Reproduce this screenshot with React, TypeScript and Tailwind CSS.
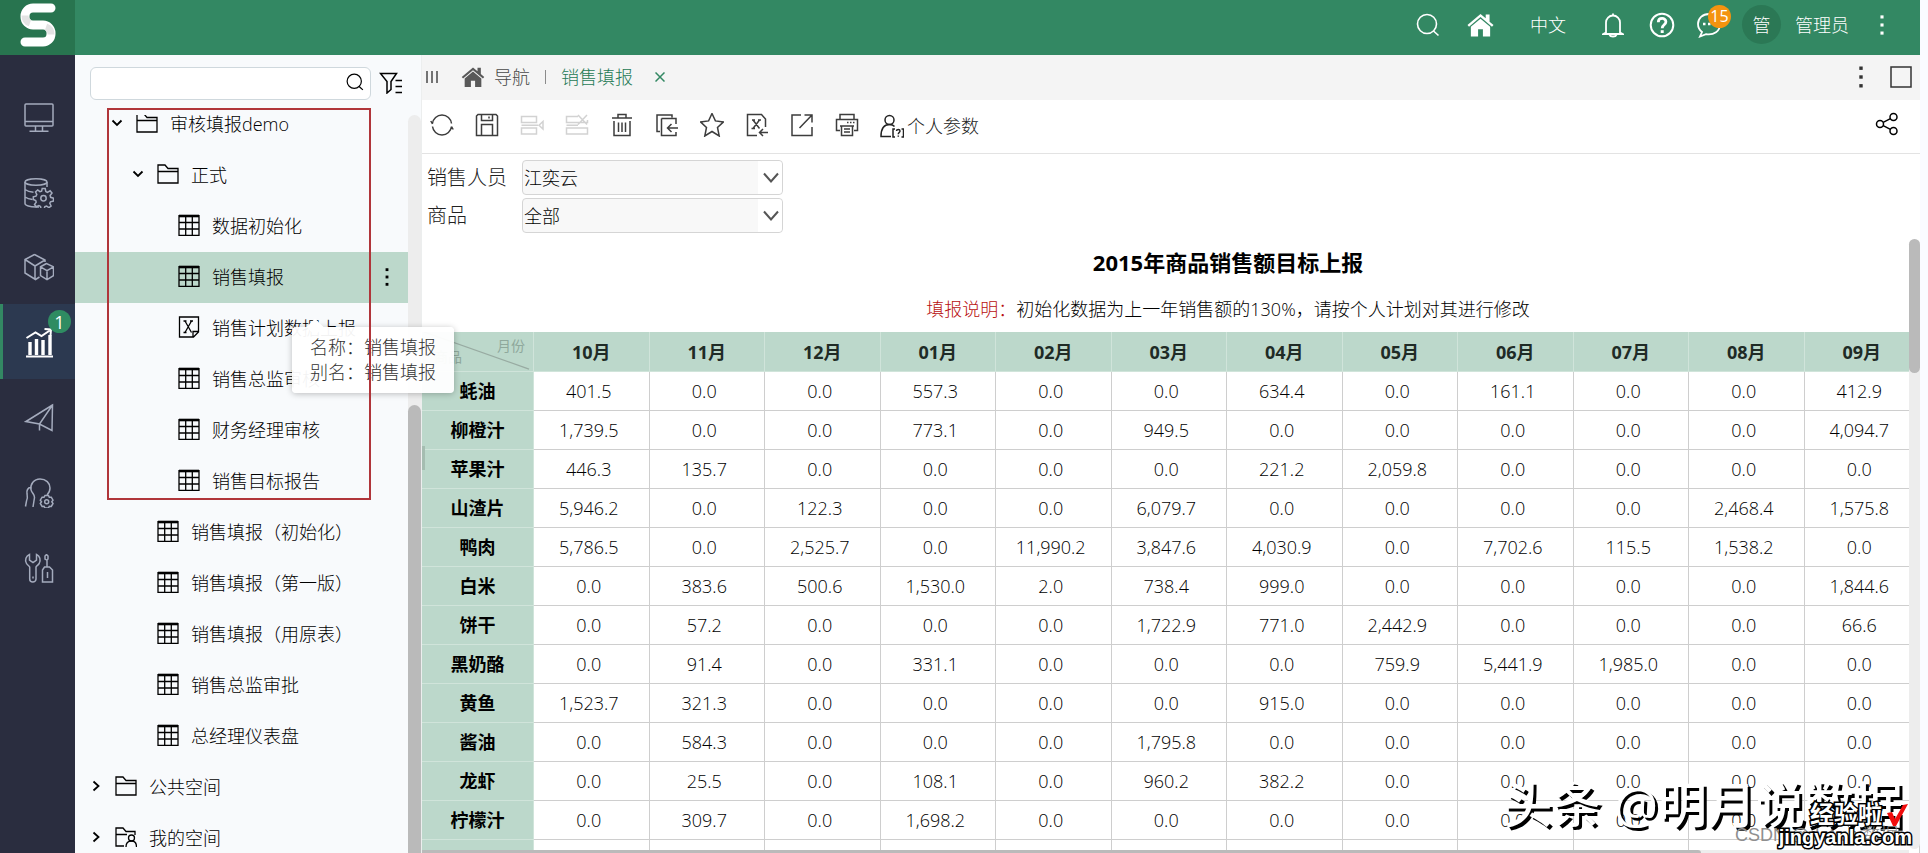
import type { ReactNode } from "react";

type IconProps = { className?: string; children: ReactNode; box?: string; width?: number };

function Icon({ className = "h-6 w-6", children, box = "0 0 24 24", width = 1.5 }: IconProps) {
  return (
    <svg
      viewBox={box}
      fill="none"
      stroke="currentColor"
      strokeWidth={width}
      className={`shrink-0 ${className}`}
      aria-hidden="true"
    >
      {children}
    </svg>
  );
}

/* ---------- shared icons ---------- */

function SearchIcon({ className }: { className?: string }) {
  return (
    <Icon className={className} width={1.6}>
      <circle cx="11" cy="11" r="9.5" />
      <path d="M17.5 18l5 4.5" />
    </Icon>
  );
}

function HomeIcon({ className }: { className?: string }) {
  return (
    <svg viewBox="0 0 28 24" fill="currentColor" className={`shrink-0 ${className}`} aria-hidden="true">
      <path d="M14 0.5L0.5 12l1.6 1.8L14 3.8l11.9 10 1.6-1.8-4.1-3.5V1h-4v4.1z" />
      <path d="M14 5.4L4 13.8V24h7.5v-7.5h5V24H24V13.8z" />
    </svg>
  );
}

function DotsIcon({ className }: { className?: string }) {
  return (
    <svg viewBox="0 0 6 24" fill="currentColor" className={`shrink-0 ${className}`} aria-hidden="true">
      <rect x="1.3" y="1.5" width="3.4" height="3.4" />
      <rect x="1.3" y="10.3" width="3.4" height="3.4" />
      <rect x="1.3" y="19.1" width="3.4" height="3.4" />
    </svg>
  );
}

/* ---------- left navigation ---------- */

const navItems = [
  {
    label: "门户",
    icon: (
      <>
        <rect x="1" y="1" width="28" height="22" rx="1" />
        <path d="M1 18.5h28M11.5 23v5M18.5 23v5M5.5 28.3h19" />
      </>
    ),
  },
  {
    label: "数据连接",
    icon: (
      <>
        <ellipse cx="12" cy="4" rx="11" ry="3.2" />
        <path d="M1 4v21.5c0 2 5 3.5 11 3.5h3M23 4v5M1 11.5c2 1.5 5 2.5 8.5 2.7M1 19c2 1.5 4.5 2.3 7.5 2.5" />
        <path d="M18.2 10.5h3l.6 3 1.6.8 2.7-1.5 1.9 2.3-1.9 2.3.5 1.9 2.9.9v2.8l-3 .8-.7 1.5 1.3 2.7-2.2 1.7-2.4-1.7-1.6.5-.9 2.9h-2.8l-.7-3-1.6-.8-2.7 1.2-1.7-2.3 1.7-2.4-.5-1.6-2.4-1v-2.6l2.7-.8.8-1.7-1.3-2.5 2.2-1.9 2.2 1.7 1.7-.6z" />
        <circle cx="19.5" cy="20.3" r="2.7" />
      </>
    ),
  },
  {
    label: "数据准备",
    icon: (
      <>
        <path d="M10.5 1.5L1 6.5v13.5l10.5 6.500 4-2.5M10.5 1.5L21 7v2M1 6.5l10 6.5L21 7M11 13v13" />
        <path d="M22.5 10.5l-6 3.3v8.9l6.5 4 6.5-4v-8.9zM16.5 13.8l6.5 3.8 6.5-3.8M23 17.6v9" />
      </>
    ),
  },
  {
    label: "分析展现",
    active: true,
    icon: (
      <>
        <path d="M2 28.5h27" strokeWidth="2" />
        <path d="M6 14v13M12.5 11v16M19 12v15M26 7v20" strokeWidth="3.4" />
        <path d="M2.5 10l9-5.5 6 3.5 9-6M20.5 1l6.5.5-.5 6" strokeWidth="2" />
      </>
    ),
  },
  {
    label: "公共设置",
    icon: <path d="M28.5 2L2 18.5l13.5 2.5 12.500 6.5zM28.5 2l-13 19v6.5" />,
  },
  {
    label: "系统监控",
    icon: (
      <>
        <path d="M7 12c-1-6 3-11 9-11s10 4 10 9c0 3-1 5-3 7M7 12c1.5 4 3.5 4 3.5 7.5L9 29M7 9c-3.5 1-4.5 4-4 7 .5 2.5 1 4-.5 7l-1 5.5" />
        <path d="M21 17.5h3.5l.8 1.8 2-.1 1.700 3-1.2 1.6 1.2 1.7-1.7 2.9-2-.1-.8 1.6H21l-1-1.6-1.9.1-1.8-2.9 1.2-1.7-1.2-1.6 1.8-3 1.9.1z" />
        <circle cx="22.7" cy="23.7" r="2" />
      </>
    ),
  },
  {
    label: "系统运维",
    icon: (
      <>
        <path d="M5.5 1.5C2 3 .5 7 2.5 10.5c1 1.7 2.7 2.3 3.2 3.5V26c0 4 6.3 4 6.3 0V14c.5-1.2 2.3-2 3.2-3.5C17 7 16 3 12.500 1.5V7L9 9.5 5.5 7z" />
        <path d="M9 23.5v2M22.5 1.5l1.5 1.5v3l-1 1v7M22.5 1.5L21 3v3l1.5 1" />
        <path d="M20.5 14h5l3 3v12h-10V17zM23.5 19v6" />
      </>
    ),
  },
];

function SideNav() {
  return (
    <nav className="flex w-[75px] shrink-0 flex-col bg-[#2a2d3f] pt-6 text-[#a4abbd]">
      {navItems.map((item) => (
        <button
          key={item.label}
          type="button"
          aria-label={item.label}
          className={`relative flex h-[75px] items-center justify-center pt-[2px] ${
            item.active ? "border-l-[3px] border-[#338863] bg-[#2c3950] pr-[3px] text-white" : ""
          }`}
        >
          <Icon className="ml-[2px] h-[30px] w-[30px]" box="0 0 30 30">
            {item.icon}
          </Icon>
          {item.active && (
            <span className="absolute top-[6px] right-1 flex h-[23px] w-[23px] items-center justify-center rounded-full bg-[#2f8c62] text-lg leading-none font-normal">
              1
            </span>
          )}
        </button>
      ))}
    </nav>
  );
}

/* ---------- top bar ---------- */

function TopBar() {
  return (
    <header className="flex h-[55px] shrink-0 items-center bg-[#338863] text-white">
      <div className="flex h-full w-[75px] items-center justify-center bg-[#28744f]">
        <svg viewBox="0 0 36 44" className="mb-[6px] h-11 w-9" fill="none" aria-label="logo">
          <path
            d="M31 5H13a8 8 0 0 0-8 8v1a8 8 0 0 0 8 8h10a8 8 0 0 1 8 8v1a8 8 0 0 1-8 8H5"
            stroke="#fff"
            strokeWidth="9"
            strokeLinecap="round"
          />
          <path d="M5 12.5c0 4 2 6.5 5 7.5M31 31.5c0-4-2-6.5-5-7.5" stroke="#e3e3e3" strokeWidth="7" />
        </svg>
      </div>
      <div className="mb-[6px] flex flex-1 items-center justify-end pr-[35px] font-normal">
        <button type="button" aria-label="搜索" className="mr-[27px]">
          <SearchIcon className="h-6 w-6" />
        </button>
        <a href="#home" aria-label="首页" className="mr-9">
          <HomeIcon className="h-6 w-[27px]" />
        </a>
        <button type="button" className="mr-9 font-light">中文</button>
        <button type="button" aria-label="通知" className="mr-[25px]">
          <Icon className="h-[26px] w-[22px]" box="0 0 22 26" width={1.8}>
            <path d="M11 1.5v1.5M4 20.5V10.5a7 7 0 0 1 14 0v10l2.5 1.5H1.5zM7.5 23c1 2 6 2 7 0" />
          </Icon>
        </button>
        <button type="button" aria-label="帮助" className="mr-[21px]">
          <Icon className="h-[26px] w-[26px]" box="0 0 26 26" width={2}>
            <circle cx="13" cy="13" r="11.3" />
            <path d="M9.3 10.2c0-5 7.6-4.8 7.6-.4 0 3-3.7 3-3.7 6.4" strokeWidth="2.8" />
            <path d="M13.2 18.2v2.8" strokeWidth="3" />
          </Icon>
        </button>
        <button type="button" aria-label="消息" className="relative mr-[20px]">
          <Icon className="h-[26px] w-[26px]" box="0 0 26 26" width={1.8}>
            <path d="M13 2C6.5 2 2 6.5 2 12c0 3.5 1.5 6 4 8l-2 4.5 6-2.3c8 1.3 14-3.2 14-9.7" />
            <path d="M7 12h2.5M12 12h2.5" strokeWidth="2.5" />
          </Icon>
          <span className="absolute -top-[7px] left-3 flex h-[23px] w-[23px] items-center justify-center rounded-full bg-[#f4930f] text-base leading-none">
            15
          </span>
        </button>
        <span className="mr-[14px] flex h-[39px] w-[39px] items-center justify-center rounded-full bg-[#2b7855] font-light">管</span>
        <span className="mr-[30px] font-light">管理员</span>
        <button type="button" aria-label="更多">
          <DotsIcon className="h-[22px] w-[6px]" />
        </button>
      </div>
    </header>
  );
}

/* ---------- resource tree ---------- */

type NodeKind = "folder" | "myfolder" | "table" | "excel";
type TreeNode = { label: string; level: number; kind: NodeKind; open?: boolean; selected?: boolean };

const tree: TreeNode[] = [
  { label: "审核填报demo", level: 1, kind: "folder", open: true },
  { label: "正式", level: 2, kind: "folder", open: true },
  { label: "数据初始化", level: 3, kind: "table" },
  { label: "销售填报", level: 3, kind: "table", selected: true },
  { label: "销售计划数据上报", level: 3, kind: "excel" },
  { label: "销售总监审核", level: 3, kind: "table" },
  { label: "财务经理审核", level: 3, kind: "table" },
  { label: "销售目标报告", level: 3, kind: "table" },
  { label: "销售填报（初始化）", level: 2, kind: "table" },
  { label: "销售填报（第一版）", level: 2, kind: "table" },
  { label: "销售填报（用原表）", level: 2, kind: "table" },
  { label: "销售总监审批", level: 2, kind: "table" },
  { label: "总经理仪表盘", level: 2, kind: "table" },
  { label: "公共空间", level: 0, kind: "folder" },
  { label: "我的空间", level: 0, kind: "myfolder" },
];

const indents = ["pl-3", "pl-[33px]", "pl-[54px]", "pl-[75px]"];

function NodeIcon({ kind }: { kind: NodeKind }) {
  return (
    <Icon className="mb-[2px] h-[22px] w-[22px]" box="0 0 22 22" width={1.3}>
      {kind === "folder" && <path d="M1 20V2h7l3 3.5h10V20zM1 8.5h20" />}
      {kind === "myfolder" && (
        <>
          <path d="M9 20H1V2h7l3 3.5h9V9M1 8.5h11" />
          <circle cx="16.5" cy="12" r="3" />
          <path d="M11 21c0-4 2-6 5.5-6s5 2.5 5 6" />
        </>
      )}
      {kind === "table" && (
        <>
          <path d="M1 1.7h20v19.6H1zM7.7 2v19M14.3 2v19M1 8.5h20M1 15h20" />
          <path d="M1 2h20" strokeWidth="2.6" />
        </>
      )}
      {kind === "excel" && (
        <>
          <path d="M1.5 1h19v15l-5 5H1.5zM20.5 15.5h-5.500V21M7 5l6.5 11.5M13.500 5L7 16.5" />
          <path d="M5.5 5h3M12 5h3M5.5 16.5h3" />
        </>
      )}
    </Icon>
  );
}

function TreeRow({ node }: { node: TreeNode }) {
  const isFolder = node.kind === "folder" || node.kind === "myfolder";
  return (
    <li className={`flex h-[51px] items-center pb-px ${indents[node.level]} ${node.selected ? "bg-[#bcd8cb]" : ""}`}>
      <span className="mr-[10px] mb-[2px] flex w-[18px] justify-center">
        {isFolder && (
          <Icon className="h-3 w-3" box="0 0 12 12" width={1.8}>
            {node.open ? <path d="M1.5 3.5L6 8l4.5-4.5" /> : <path d="M3.5 1.5L8.5 6l-5 4.5" />}
          </Icon>
        )}
      </span>
      <NodeIcon kind={node.kind} />
      <a href="#node" className="ml-3 flex-1 whitespace-nowrap">{node.label}</a>
      {node.selected && (
        <button type="button" aria-label="操作" className="mr-[18px]">
          <DotsIcon className="h-5 w-[6px]" />
        </button>
      )}
    </li>
  );
}

function ResourceTree() {
  return (
    <aside className="relative flex w-[347px] shrink-0 flex-col border-r border-[#eceeee] bg-[#f8fafc] text-black">
      <div className="flex h-[60px] shrink-0 items-center pb-1 pl-[15px]">
        <div className="relative w-[281px]">
          <input
            type="text"
            aria-label="搜索资源"
            className="block h-[33px] w-full rounded-md border border-[#cfd8dd] bg-white pr-9 pl-3 outline-none"
          />
          <span className="pointer-events-none absolute top-[6px] right-[7px]">
            <SearchIcon className="h-[18px] w-[18px]" />
          </span>
        </div>
        <button type="button" aria-label="筛选" className="ml-2">
          <Icon className="h-[22px] w-6" box="0 0 24 22" width={1.5}>
            <path d="M1.5 1.5h16l-5.5 8v8L8 21V9.5z" />
            <path d="M16.5 8.5H23M16.5 14.5H23M16.5 20.5H23" />
          </Icon>
        </button>
      </div>
      <div className="flex min-h-0 flex-1">
        <div className="min-w-0 flex-1 overflow-hidden">
          <ul className="-mt-4">
            {tree.map((node) => (
              <TreeRow key={node.label} node={node} />
            ))}
          </ul>
        </div>
        <div className="flex w-[13px] flex-col rounded-t-full bg-[#ededed] pt-[290px]">
          <div className="flex-1 rounded-t-full bg-[#bababa]" />
        </div>
      </div>

      {/* name tooltip of the hovered node */}
      <div className="absolute top-[272px] left-[217px] z-10 rounded bg-white/95 px-[18px] py-2 leading-[25px] whitespace-nowrap text-[#333] shadow-[0_1px_6px_rgba(0,0,0,0.25)]">
        <span className="absolute -top-[6px] left-[17px] h-3 w-3 rotate-45 bg-white" />
        <p>名称：销售填报</p>
        <p>别名：销售填报</p>
      </div>
      <div className="pointer-events-none absolute top-[53px] left-8 z-20 h-[392px] w-[264px] border-2 border-[#b0353a]" />
    </aside>
  );
}

/* ---------- tabs and toolbar ---------- */

function TabBar() {
  return (
    <div className="flex h-[45px] shrink-0 items-center bg-[#f4f4f4] pr-2 pb-[2px] pl-1 text-[#484848]">
      <Icon className="h-3 w-3" box="0 0 12 12" width={1.5}>
        <path d="M1 0v12M6 0v12M11 0v12" />
      </Icon>
      <HomeIcon className="mr-[9px] ml-[23px] h-5 w-6 text-[#595959]" />
      <a href="#nav">导航</a>
      <span className="mx-[15px] h-[14px] w-px bg-[#8b8b8b]" />
      <a href="#report" className="text-[#257a55]">销售填报</a>
      <button type="button" aria-label="关闭" className="ml-[22px] text-[#338863]">
        <Icon className="h-[10px] w-[10px]" box="0 0 10 10">
          <path d="M.5.5l9 9M9.5.5l-9 9" />
        </Icon>
      </button>
      <button type="button" aria-label="更多" className="mr-[26px] ml-auto text-[#333]">
        <DotsIcon className="h-6 w-[6px]" />
      </button>
      <button type="button" aria-label="最大化" className="text-[#333]">
        <Icon className="h-[22px] w-[22px]" box="0 0 22 22">
          <path d="M1 1h20v20H1z" />
        </Icon>
      </button>
    </div>
  );
}

const tools = [
  {
    label: "刷新",
    icon: <path d="M2.5 10.5C3 6 7 2 12 2s9 4 9.5 8.5M2.5 13.500C3 18 7 22 12 22s9-4 9.5-8.5M.8 8l1.7 3M21.5 13.5l1.7 3" />,
  },
  {
    label: "保存",
    icon: <path d="M3 1.5h18l1.5 1.500v19.5h-21V3zM6.5 1.5v6h11v-6M6.5 22.5v-11h11v11M14 3.5v2" />,
  },
  {
    label: "插入行",
    disabled: true,
    icon: <path d="M1.5 3.5h15v6h-15zM1.5 15h15v6h-15zM1.5 12.2H18M23 8.5v7.5l-4-3.8z" />,
  },
  {
    label: "删除行",
    disabled: true,
    icon: <path d="M13 3.5H1.5v6h21V7M1.5 15h21v6h-21zM1.5 12.2H13M13 2l9 9.5M22 2l-9 9.5" />,
  },
  {
    label: "清空",
    icon: <path d="M2 5h20M8 5V1.5h8V5M4 8v14.5h16V8M8.5 9.5V19M12 9.5V19M15.5 9.5V19" />,
  },
  {
    label: "导入",
    icon: <path d="M5 18.5H2V2h15v2.5M6.5 5.5H21V11M21 19v3.5H6.5v-17M23 15H12.500M16.5 11l-4 4 4 4" />,
  },
  {
    label: "收藏",
    icon: <path d="M12 .5l3.4 7.4 8.1 1-6 5.600 1.700 8.500L12 18.500 4.800 23l1.700-8.500-6-5.600 8.100-1z" />,
  },
  {
    label: "导入Excel",
    icon: <path d="M12 22.5H2.5v-21h14l4 4.5v8M8 7l6.5 8.5M14.5 7L8 15.5M7 7h3M13 7h3M6.5 15.5h3.5M23 19.5h-8.5M18 16l-3.5 3.5L18 23" />,
  },
  {
    label: "导出",
    icon: <path d="M11 2H2v20.5h20V14M9.5 15L22 2M14.5 2H22v7.5" />,
  },
  {
    label: "打印",
    icon: <path d="M5 6.5v-5h14v5M5 17.5H1.5v-11h21v11H19M6.5 13h11v9.5h-11zM5 13h14M9 16h6M9 19h6M12 9.5h1.5M15 9.5h1.5M18 9.5h1.5" />,
  },
];

function Toolbar() {
  return (
    <div className="flex h-[54px] shrink-0 items-center gap-[21px] border-b border-[#e3e3e3] pr-[21px] pl-2 text-[#3d3d3d]">
      {tools.map((tool) => (
        <button
          key={tool.label}
          type="button"
          aria-label={tool.label}
          disabled={tool.disabled}
          className="mb-1 disabled:text-[#d2d2d2]"
        >
          <Icon>{tool.icon}</Icon>
        </button>
      ))}
      <button type="button" className="mb-[2px] flex items-center gap-[3px] text-[#222]">
        <Icon className="h-6 w-6">
          <circle cx="9.5" cy="6" r="4.5" />
          <path d="M11 22.5H1c0-7 2.5-12 8.5-12 2.5 0 4 .8 5 2M15 15h-2v8h2M21.5 15h2v8h-2M16.5 17c0-2 3.5-2 3.5 0 0 1.5-1.7 1.5-1.7 3.2M18.3 21.5v1.3" />
        </Icon>
        个人参数
      </button>
      <button type="button" aria-label="分享" className="mb-[6px] ml-auto text-black">
        <Icon className="h-6 w-6">
          <circle cx="5" cy="12" r="3.5" />
          <circle cx="18.5" cy="5" r="3.5" />
          <circle cx="18.5" cy="19" r="3.5" />
          <path d="M8.2 10.3l7.2-3.6M8.2 13.7l7.2 3.6" />
        </Icon>
      </button>
    </div>
  );
}

/* ---------- report ---------- */

function ParamSelect({ id, label, value }: { id: string; label: string; value: string }) {
  return (
    <div className="flex items-center">
      <label htmlFor={id} className="w-[95px] text-xl text-[#222]">{label}</label>
      <div className="relative w-[261px]">
        <select
          id={id}
          className="h-[35px] w-full appearance-none rounded border border-[#d5d5d5] bg-[#f8f8f8] pl-px text-black"
        >
          <option>{value}</option>
        </select>
        <span className="pointer-events-none absolute inset-y-px right-px flex w-6 items-center justify-end rounded-r bg-white pr-[3px] text-[#555]">
          <Icon className="h-4 w-4" box="0 0 16 16" width={2}>
            <path d="M1 3.5l7 8 7-8" />
          </Icon>
        </span>
      </div>
    </div>
  );
}

const months = ["10月", "11月", "12月", "01月", "02月", "03月", "04月", "05月", "06月", "07月", "08月", "09月"];

const rows: [string, string[]][] = [
  ["蚝油", ["401.5", "0.0", "0.0", "557.3", "0.0", "0.0", "634.4", "0.0", "161.1", "0.0", "0.0", "412.9"]],
  ["柳橙汁", ["1,739.5", "0.0", "0.0", "773.1", "0.0", "949.5", "0.0", "0.0", "0.0", "0.0", "0.0", "4,094.7"]],
  ["苹果汁", ["446.3", "135.7", "0.0", "0.0", "0.0", "0.0", "221.2", "2,059.8", "0.0", "0.0", "0.0", "0.0"]],
  ["山渣片", ["5,946.2", "0.0", "122.3", "0.0", "0.0", "6,079.7", "0.0", "0.0", "0.0", "0.0", "2,468.4", "1,575.8"]],
  ["鸭肉", ["5,786.5", "0.0", "2,525.7", "0.0", "11,990.2", "3,847.6", "4,030.9", "0.0", "7,702.6", "115.5", "1,538.2", "0.0"]],
  ["白米", ["0.0", "383.6", "500.6", "1,530.0", "2.0", "738.4", "999.0", "0.0", "0.0", "0.0", "0.0", "1,844.6"]],
  ["饼干", ["0.0", "57.2", "0.0", "0.0", "0.0", "1,722.9", "771.0", "2,442.9", "0.0", "0.0", "0.0", "66.6"]],
  ["黑奶酪", ["0.0", "91.4", "0.0", "331.1", "0.0", "0.0", "0.0", "759.9", "5,441.9", "1,985.0", "0.0", "0.0"]],
  ["黄鱼", ["1,523.7", "321.3", "0.0", "0.0", "0.0", "0.0", "915.0", "0.0", "0.0", "0.0", "0.0", "0.0"]],
  ["酱油", ["0.0", "584.3", "0.0", "0.0", "0.0", "1,795.8", "0.0", "0.0", "0.0", "0.0", "0.0", "0.0"]],
  ["龙虾", ["0.0", "25.5", "0.0", "108.1", "0.0", "960.2", "382.2", "0.0", "0.0", "0.0", "0.0", "0.0"]],
  ["柠檬汁", ["0.0", "309.7", "0.0", "1,698.2", "0.0", "0.0", "0.0", "0.0", "0.0", "0.0", "0.0", "0.0"]],
  ["", ["", "", "", "", "", "", "", "", "", "", "", ""]],
];

function ReportTable() {
  return (
    <table className="w-full table-fixed border-separate border-spacing-0 text-center text-black">
      <thead>
        <tr className="h-10 bg-[#bcd8cb] text-[#1f2b26]">
          <th className="relative w-28 border-r border-b border-[#d0e4da] p-0 text-sm font-normal text-[#8fa89c]">
            <svg viewBox="0 0 112 40" preserveAspectRatio="none" className="absolute inset-0 h-full w-full">
              <path d="M2 0L108 38" stroke="#98aba2" strokeWidth="1.3" />
            </svg>
            <span className="absolute top-1 right-2">月份</span>
            <span className="absolute bottom-1 left-3">商品</span>
          </th>
          {months.map((m) => (
            <th key={m} className="border-r border-b border-[#d0e4da] p-0 font-bold">{m}</th>
          ))}
        </tr>
      </thead>
      <tbody>
        {rows.map(([name, values]) => (
          <tr key={name} className="h-[39px]">
            <th className="border-r border-b border-[#d0e4da] bg-[#bcd8cb] p-0 font-bold">{name}</th>
            {values.map((v, i) => (
              <td key={i} className="border-r border-b border-[#cecece] p-0 pr-[5px]">{v}</td>
            ))}
          </tr>
        ))}
      </tbody>
    </table>
  );
}

function Report() {
  return (
    <section className="relative min-h-0 flex-1 overflow-hidden">
      <div className="flex flex-col gap-[3px] pt-[6px] pl-[5px]">
        <ParamSelect id="seller" label="销售人员" value="江奕云" />
        <ParamSelect id="product" label="商品" value="全部" />
      </div>
      <div className="pt-[14px] pb-[11px] pl-[114px] text-center text-black">
        <h1 className="mb-5 text-[22px] leading-[30px] font-bold">2015年商品销售额目标上报</h1>
        <p className="leading-6">
          <span className="text-[#b80f0f]">填报说明：</span>
          初始化数据为上一年销售额的130%，请按个人计划对其进行修改
        </p>
      </div>
      <ReportTable />

      {/* overlay scrollbars */}
      <div className="absolute top-[85px] right-0 bottom-1 w-[11px] rounded-full bg-[#ededed]">
        <div className="h-[134px] rounded-full bg-[#bababa]" />
      </div>
      <div className="absolute right-[11px] bottom-0 left-0 h-[3px] bg-[#ededed]">
        <div className="h-full w-[86%] rounded-tr-full bg-[#bababa]" />
      </div>
      <span className="absolute top-[292px] left-0 h-6 w-[3px] bg-[#a5bdb1]" />
    </section>
  );
}

/* ---------- watermarks ---------- */

function Watermarks() {
  return (
    <div className="pointer-events-none absolute right-0 bottom-0 z-30 h-20 w-[450px] whitespace-nowrap">
      <p className="absolute right-[25px] bottom-[19px] text-[49px] leading-[60px] font-medium text-white [text-shadow:3px_3px_0_#000]">
        头条 @明月说数据
      </p>
      <p className="absolute bottom-[6px] left-[257px] font-['Liberation_Sans','Noto_Sans_CJK_SC',sans-serif] text-lg leading-6 text-[#8f8f8f]">
        CSDN @datayx数据
      </p>
      <div className="absolute right-4 bottom-[6px] text-right font-['Liberation_Sans','Noto_Sans_CJK_SC',sans-serif] font-bold text-white [paint-order:stroke_fill] [-webkit-text-stroke:3px_#000]">
        <p className="flex items-center justify-end pr-1 text-2xl leading-6">
          经验啦
          <svg viewBox="0 0 22 22" className="ml-1 h-[22px] w-[22px]" aria-hidden="true">
            <path d="M1 9l5-1 3 7L17 1l5-1L10 22H7z" fill="#f00c0c" />
          </svg>
        </p>
        <p className="text-xl leading-5">jingyanla.com</p>
      </div>
    </div>
  );
}

export default function App() {
  return (
    <div className="relative flex h-screen flex-col overflow-hidden bg-[#fafbff] pr-2 font-['Open_Sans','Noto_Sans_CJK_SC',sans-serif] text-lg font-light">
      <TopBar />
      <div className="flex min-h-0 flex-1">
        <SideNav />
        <ResourceTree />
        <main className="flex min-w-0 flex-1 flex-col bg-white">
          <TabBar />
          <Toolbar />
          <Report />
        </main>
      </div>
      <Watermarks />
    </div>
  );
}
